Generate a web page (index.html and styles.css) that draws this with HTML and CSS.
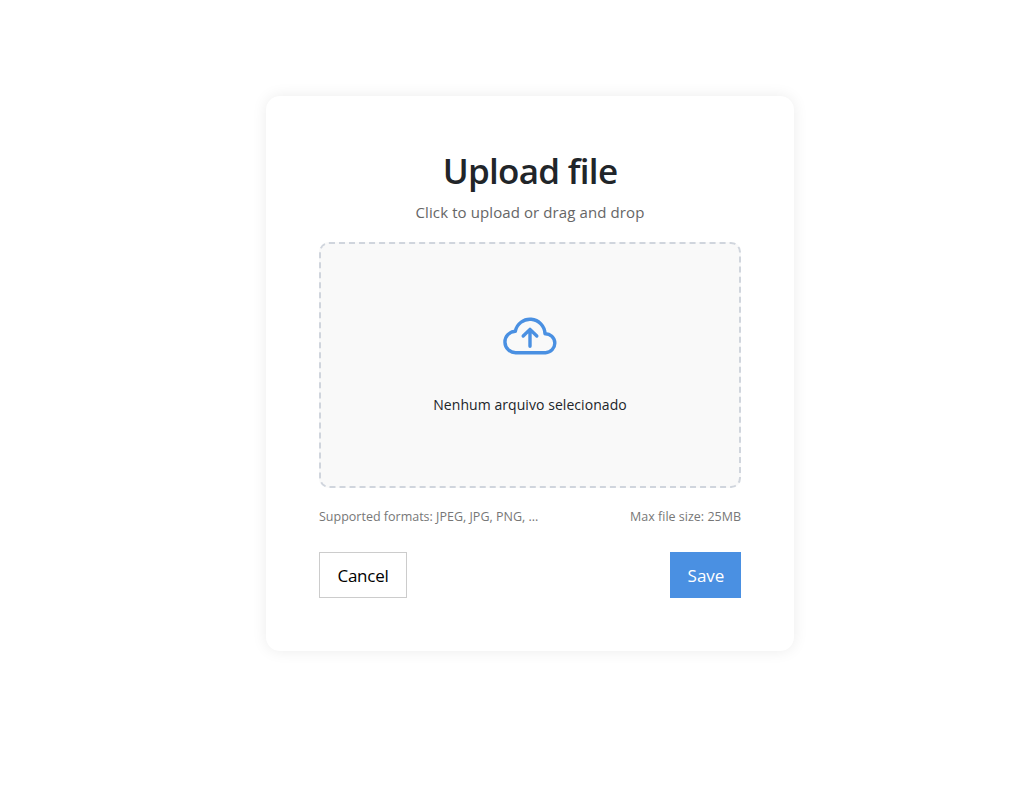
FILE: index.html
```html
<!DOCTYPE html>
<html lang="en">
<head>
<meta charset="utf-8">
<title>Upload file</title>
<link rel="stylesheet" href="styles.css">
</head>
<body>
<main class="card">
  <h1 class="title">Upload file</h1>
  <p class="subtitle">Click to upload or drag and drop</p>
  <div class="dropzone">
    <svg class="cloud" viewBox="0 0 80 60" width="80" height="60" aria-hidden="true">
      <path d="M25.3 26.3A15 15 0 0 1 55 28.7A9.5 9.5 0 0 1 55.6 47.7H26A10.7 10.7 0 0 1 25.3 26.3Z"/>
      <path d="M40 41.3V24.8M33.2 31L40 24.4L46.8 31"/>
    </svg>
    <span class="filename">Nenhum arquivo selecionado</span>
  </div>
  <div class="hints">
    <span>Supported formats: JPEG, JPG, PNG, ...</span>
    <span>Max file size: 25MB</span>
  </div>
  <div class="actions">
    <button class="btn cancel" type="button">Cancel</button>
    <button class="btn save" type="button">Save</button>
  </div>
</main>
</body>
</html>
```
FILE: styles.css
```css
* { box-sizing: border-box; }
body {
  margin: 0;
  padding: 96px 0 0 266px;
  min-height: 791px;
  background: #fff;
  font-family: "Segoe UI", "Open Sans", "Noto Sans", sans-serif;
  color: #212529;
}
.card {
  width: 528px;
  height: 555px;
  padding: 53px;
  border-radius: 14px;
  background: #fff;
  box-shadow: 0 0 15px rgba(0, 0, 0, 0.08);
}
.title {
  margin: 0;
  font-size: 35px;
  font-weight: 600;
  line-height: 44px;
  letter-spacing: -0.7px;
  text-align: center;
}
.subtitle {
  margin: 7px 0 0;
  font-size: 15px;
  line-height: 24px;
  letter-spacing: 0.1px;
  color: #666;
  text-align: center;
}
.dropzone {
  display: flex;
  flex-direction: column;
  align-items: center;
  height: 246px;
  margin-top: 18px;
  padding-top: 61px;
  border: 2px dashed #d0d5dd;
  border-radius: 10px;
  background: #f9f9f9;
}
.cloud {
  fill: none;
  stroke: #4a90e2;
  stroke-width: 3.4;
  stroke-linecap: round;
  stroke-linejoin: round;
}
.filename {
  margin-top: 29px;
  font-size: 14px;
  line-height: 22px;
  letter-spacing: 0.06px;
}
.hints {
  display: flex;
  justify-content: space-between;
  margin-top: 19px;
  font-size: 12.5px;
  line-height: 20px;
  color: #777;
  white-space: nowrap;
}
.actions {
  display: flex;
  justify-content: space-between;
  margin-top: 25px;
}
.btn {
  height: 46px;
  padding: 2px 0 0;
  border: 1px solid #ccc;
  background: #fff;
  color: #000;
  font-family: inherit;
  font-size: 17px;
  line-height: 24px;
}
.cancel { width: 88px; letter-spacing: -0.25px; }
.save {
  width: 71px;
  padding-left: 1px;
  border-color: #4a90e2;
  background: #4a90e2;
  color: #fff;
}
```
